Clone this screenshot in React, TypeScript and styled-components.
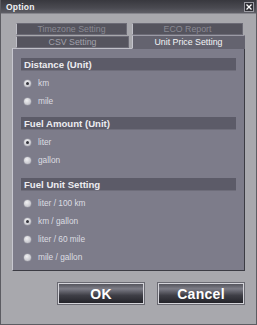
import styled, { createGlobalStyle } from "styled-components";

const GlobalStyle = createGlobalStyle`
    html, body {
        margin: 0;
        padding: 0;
        background: #a8a8ad;
    }
    * {
        box-sizing: border-box;
    }
`;

const Window = styled.div`
    width: 257px;
    height: 325px;
    display: flex;
    flex-direction: column;
    background: #a8a8ad;
    border: 1px solid #5c5c62;
    border-top: none;
    font-family: "Liberation Sans", Arial, sans-serif;
`;

const TitleBar = styled.div`
    height: 14px;
    display: flex;
    align-items: center;
    justify-content: space-between;
    padding: 0 2px 0 5px;
    background: linear-gradient(#38383e, #4a4a51 60%, #5e5e66);
    border-bottom: 1px solid #85858c;
`;

const Title = styled.span`
    color: #f2f2f4;
    font-size: 8.5px;
    font-weight: bold;
    letter-spacing: 0.2px;
`;

const CloseButton = styled.div`
    width: 10px;
    height: 10px;
    display: flex;
    align-items: center;
    justify-content: center;
    background: #2e2e34;
    border: 1px solid #9a9aa2;
`;

const Body = styled.div`
    flex: 1;
    display: flex;
    flex-direction: column;
    padding: 9px 11px 0 11px;
`;

const Tabs = styled.div`
    display: flex;
    flex-direction: column;
    gap: 1px;
    padding: 0 2px 0 4px;
`;

const TabRow = styled.div`
    display: flex;
    align-items: flex-start;
    gap: 5px;
`;

const Tab = styled.div<{ $active?: boolean; $dim?: boolean }>`
    flex: 1;
    height: ${(p) => (p.$active ? "14px" : "12px")};
    margin: ${(p) => (p.$active ? "-1px -2px -1px -2px" : "0")};
    position: ${(p) => (p.$active ? "relative" : "static")};
    z-index: ${(p) => (p.$active ? 1 : 0)};
    display: flex;
    align-items: center;
    justify-content: center;
    font-size: 8.8px;
    color: ${(p) => (p.$active ? "#f4f4f6" : p.$dim ? "#8a8a94" : "#a2a2ac")};
    background: ${(p) => (p.$active ? "#64636f" : "#55545e")};
    border: 1px solid ${(p) => (p.$active ? "#64636f" : "#6c6b76")};
    border-top-color: ${(p) => (p.$active ? "#9c9ba6" : "#6c6b76")};
    border-left-color: ${(p) => (p.$active ? "#c4c4cc" : "#c0c0c8")};
`;

const Panel = styled.div`
    height: 223px;
    display: flex;
    flex-direction: column;
    padding: 9px 8px;
    background: #7d7c8a;
    border: 1px solid #3c3c44;
    border-top-color: #c0c0c8;
    border-left-color: #c8c8d0;
`;

const SectionHeader = styled.div<{ $gap?: number }>`
    height: 13px;
    margin-top: ${(p) => p.$gap ?? 0}px;
    margin-bottom: 3px;
    display: flex;
    align-items: center;
    padding-left: 3px;
    background: #5c5b68;
    border-bottom: 1px solid #6e6d7a;
    color: #ececf0;
    font-size: 9.6px;
    font-weight: bold;
`;

const Option = styled.div`
    height: 18px;
    display: flex;
    align-items: center;
    gap: 7px;
    padding-left: 3px;
    color: #dcdce2;
    font-size: 8.3px;
`;

const Radio = styled.span<{ $checked?: boolean }>`
    width: 7px;
    height: 7px;
    border-radius: 50%;
    display: flex;
    align-items: center;
    justify-content: center;
    background: radial-gradient(circle at 40% 35%, #f0f0f2, #b4b4bc);
    box-shadow: 0 0 0 0.5px #9a9aa4;

    &::after {
        content: "";
        width: 3px;
        height: 3px;
        border-radius: 50%;
        background: ${(p) => (p.$checked ? "#34343c" : "transparent")};
    }
`;

const ButtonRow = styled.div`
    display: flex;
    justify-content: flex-end;
    gap: 14px;
    margin-top: 12px;
    padding-right: 1px;
`;

const Button = styled.div`
    width: 86px;
    height: 21px;
    display: flex;
    align-items: center;
    justify-content: center;
    background: linear-gradient(#55555d, #7c7c86 25%, #3e3e46 60%, #24242a);
    border: 1px solid #d4d4da;
    outline: 1px solid #6a6a72;
    color: #ffffff;
    font-size: 14px;
    font-weight: bold;
    letter-spacing: 0.3px;
`;

type Section = {
    title: string;
    gap?: number;
    options: { label: string; checked?: boolean }[];
};

const sections: Section[] = [
    {
        title: "Distance (Unit)",
        options: [{ label: "km", checked: true }, { label: "mile" }],
    },
    {
        title: "Fuel Amount (Unit)",
        gap: 7,
        options: [{ label: "liter", checked: true }, { label: "gallon" }],
    },
    {
        title: "Fuel Unit Setting",
        gap: 9,
        options: [
            { label: "liter / 100 km" },
            { label: "km / gallon", checked: true },
            { label: "liter / 60 mile" },
            { label: "mile / gallon" },
        ],
    },
];

export default function App() {
    return (
        <>
            <GlobalStyle />
            <Window>
                <TitleBar>
                    <Title>Option</Title>
                    <CloseButton>
                        <svg width="6" height="6" viewBox="0 0 6 6">
                            <path
                                d="M0.5 0.5 L5.5 5.5 M5.5 0.5 L0.5 5.5"
                                stroke="#ffffff"
                                strokeWidth="1.3"
                            />
                        </svg>
                    </CloseButton>
                </TitleBar>
                <Body>
                    <Tabs>
                        <TabRow>
                            <Tab $dim>Timezone Setting</Tab>
                            <Tab $dim>ECO Report</Tab>
                        </TabRow>
                        <TabRow>
                            <Tab>CSV Setting</Tab>
                            <Tab $active>Unit Price Setting</Tab>
                        </TabRow>
                    </Tabs>
                    <Panel>
                        {sections.map((s) => (
                            <div key={s.title}>
                                <SectionHeader $gap={s.gap}>{s.title}</SectionHeader>
                                {s.options.map((o) => (
                                    <Option key={o.label}>
                                        <Radio $checked={o.checked} />
                                        {o.label}
                                    </Option>
                                ))}
                            </div>
                        ))}
                    </Panel>
                    <ButtonRow>
                        <Button>OK</Button>
                        <Button>Cancel</Button>
                    </ButtonRow>
                </Body>
            </Window>
        </>
    );
}
